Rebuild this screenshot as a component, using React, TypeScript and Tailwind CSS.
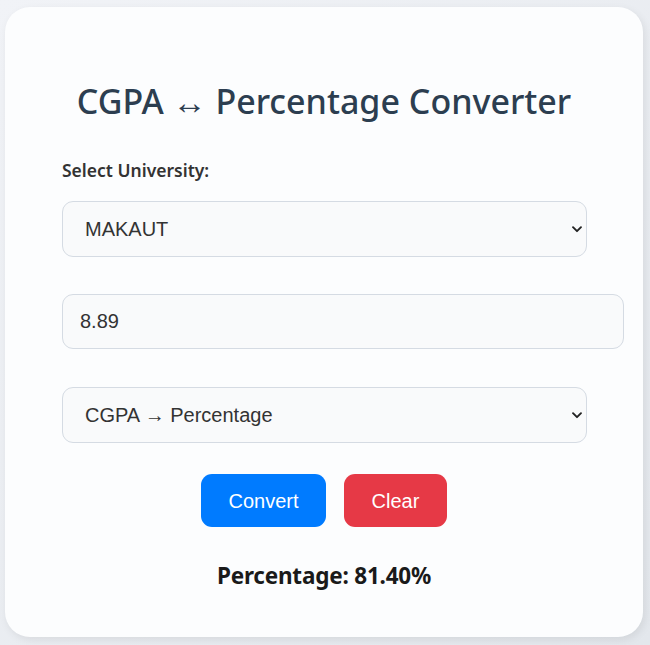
import React, { useState } from "react";

const Chevron = () => (
  <svg
    width="12"
    height="12"
    viewBox="0 0 12 12"
    className="pointer-events-none absolute right-[4px] top-1/2 -translate-y-1/2"
  >
    <path
      d="M2 4.2 L6 8.2 L10 4.2"
      fill="none"
      stroke="#222"
      strokeWidth="1.9"
      strokeLinecap="round"
      strokeLinejoin="round"
    />
  </svg>
);

export default function App() {
  const [university, setUniversity] = useState("MAKAUT");
  const [value, setValue] = useState("8.89");
  const [mode, setMode] = useState("cgpa");

  return (
    <div className="min-h-[645px] bg-gradient-to-br from-[#f1f3f7] to-[#e3e7ec] px-[5px] pt-[7px] pb-[8px] font-['Noto_Sans',sans-serif]">
      {/* Card */}
      <div className="w-[638px] h-[630px] rounded-[25px] bg-[#fcfdfe] shadow-[2px_3px_8px_rgba(0,0,0,0.08)] px-[57px] pt-[75px]">
        <h1 className="text-center text-[34px] leading-[38px] font-medium text-[#2c3e50]">
          CGPA ↔ Percentage Converter
        </h1>

        <label className="block mt-[39px] text-[17.5px] leading-[22px] font-semibold text-[#333]">
          Select University:
        </label>

        <div className="relative mt-[20px] w-[525px]">
          <select
            value={university}
            onChange={(e) => setUniversity(e.target.value)}
            className="appearance-none w-full h-[56px] rounded-[11px] border border-[#d5dbe3] bg-[#f9fafb] pl-[22px] text-[20px] text-[#333] font-['Liberation_Sans',sans-serif] outline-none"
          >
            <option>MAKAUT</option>
            <option>AKTU</option>
            <option>VTU</option>
          </select>
          <Chevron />
        </div>

        <input
          value={value}
          onChange={(e) => setValue(e.target.value)}
          className="block mt-[37px] w-[562px] h-[55px] rounded-[11px] border border-[#d5dbe3] bg-[#f9fafb] pl-[17px] text-[20px] text-[#333] font-['Liberation_Sans',sans-serif] outline-none"
        />

        <div className="relative mt-[38px] w-[525px]">
          <select
            value={mode}
            onChange={(e) => setMode(e.target.value)}
            className="appearance-none w-full h-[56px] rounded-[11px] border border-[#d5dbe3] bg-[#f9fafb] pl-[22px] text-[20px] text-[#333] font-['Liberation_Sans',sans-serif] outline-none"
          >
            <option value="cgpa">CGPA → Percentage</option>
            <option value="pct">Percentage → CGPA</option>
          </select>
          <Chevron />
        </div>

        <div className="flex justify-center gap-[18px] mt-[31px] font-['Liberation_Sans',sans-serif]">
          <button className="w-[125px] h-[53px] rounded-[11px] bg-[#007bff] text-white text-[20px]">
            Convert
          </button>
          <button className="w-[103px] h-[53px] rounded-[11px] bg-[#e63946] text-white text-[20px]">
            Clear
          </button>
        </div>

        <p className="mt-[35px] text-center text-[22.5px] leading-[28px] font-bold text-[#1a1a1a] tracking-[-0.2px]">
          Percentage: 81.40%
        </p>
      </div>
    </div>
  );
}
